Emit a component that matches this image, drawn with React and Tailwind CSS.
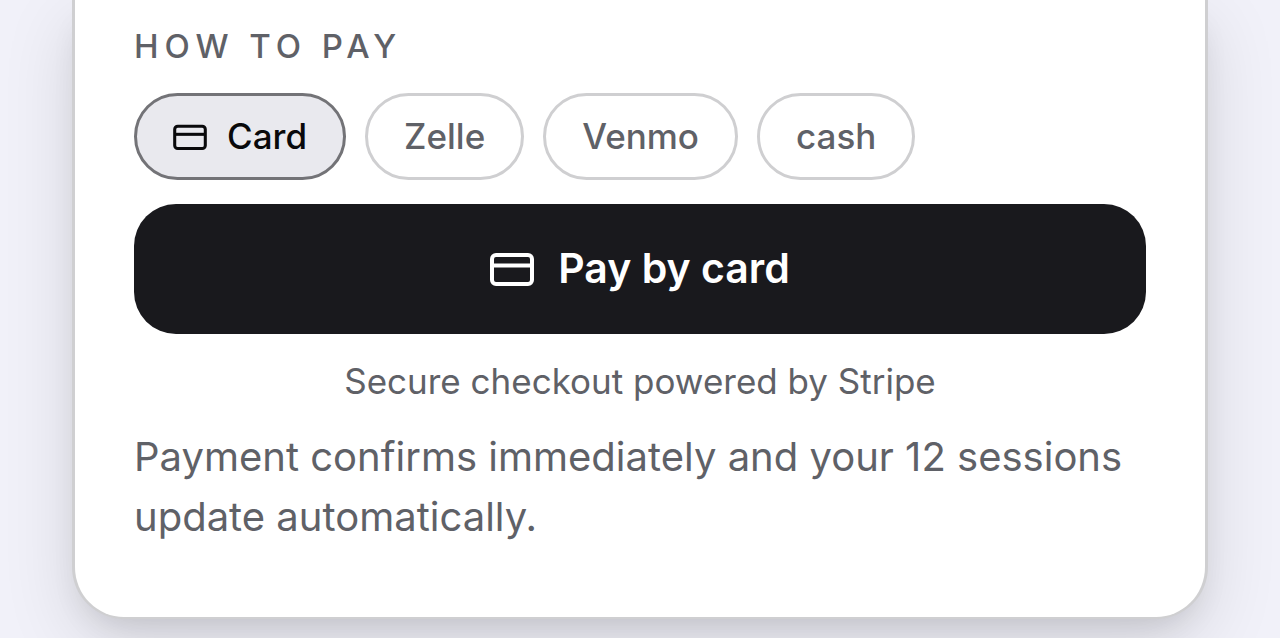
import React, { useState } from "react";
import clsx from "clsx";

const methods = [
  { id: "card", label: "Card", icon: true },
  { id: "zelle", label: "Zelle" },
  { id: "venmo", label: "Venmo" },
  { id: "cash", label: "cash" },
];

function CardIcon({ className }) {
  return (
    <svg
      className={className}
      viewBox="0 0 44 34"
      fill="none"
      stroke="currentColor"
      strokeWidth="4"
      strokeLinejoin="round"
      aria-hidden="true"
    >
      <rect x="2" y="3" width="40" height="29" rx="4" />
      <path d="M2 13.5h40" />
    </svg>
  );
}

export default function App() {
  const [method, setMethod] = useState("card");

  return (
    <main className="min-h-screen overflow-hidden bg-[#f1f1f9] px-18 pb-5 font-['Inter',sans-serif] text-[#5f6167]">
      <section className="rounded-b-[52px] border-x-3 border-b-2 border-[#cfcfd1] bg-white px-[59px] pt-[26px] pb-[70px] shadow-[0_24px_72px_rgba(0,0,0,0.12),0_16px_32px_-12px_rgba(0,0,0,0.12)]">
        <h2 className="text-[33px] leading-10 font-medium tracking-[0.18em] uppercase">
          How to pay
        </h2>

        <div className="mt-[27px] flex flex-wrap gap-[19px]">
          {methods.map((m) => (
            <button
              key={m.id}
              type="button"
              aria-pressed={method === m.id}
              onClick={() => setMethod(m.id)}
              className={clsx(
                "flex h-[87px] items-center gap-5 rounded-full border-3 px-9 text-[35px] font-medium",
                method === m.id
                  ? "border-[#737377] bg-[#e9e9ee] text-[#09090b]"
                  : "border-[#cfcfd1] bg-white"
              )}
            >
              {m.icon && <CardIcon className="h-[26px] w-[34px]" />}
              {m.label}
            </button>
          ))}
        </div>

        <button
          type="button"
          className="mt-6 flex h-[130px] w-full items-center justify-center gap-6 rounded-[42px] bg-[#19191d] text-[41px] font-semibold text-white"
        >
          <CardIcon className="h-[34px] w-11" />
          Pay by card
        </button>

        <p className="mt-[21px] text-center text-[35px] leading-[52px]">
          Secure checkout powered by Stripe
        </p>
        <p className="mt-5 text-[40px] leading-[60px]">
          Payment confirms immediately and your 12 sessions update automatically.
        </p>
      </section>
    </main>
  );
}
